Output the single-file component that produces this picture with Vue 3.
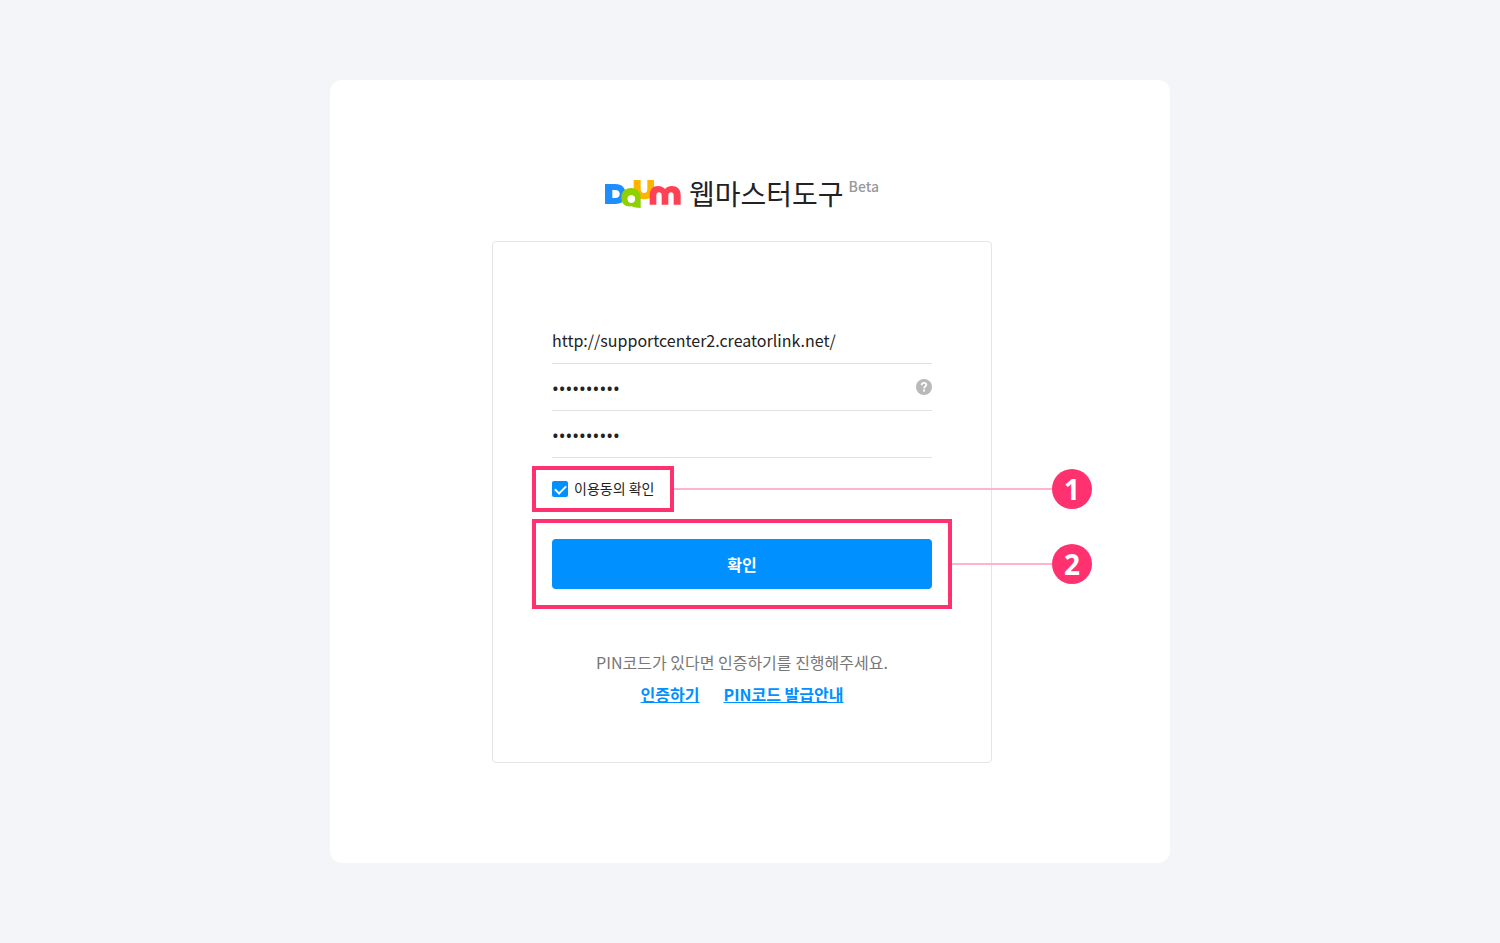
<script setup>
import { ref } from 'vue'

const url = ref('http://supportcenter2.creatorlink.net/')
const pin = ref('1234567890')
const pinAgain = ref('1234567890')
const agreed = ref(true)
</script>

<template>
  <div class="page">
    <main class="card">
      <header class="brand">
        <svg class="logo" viewBox="30 27 228 90" role="img" aria-label="Daum">
          <path fill="#ffb400" d="M116 30h21v27q0 12 10 12t10-12V30h20v29q0 29-30 29t-31-29z" />
          <path fill="#1e8eff" fill-rule="evenodd" d="M30 42h31c20 0 31 12 31 30s-11 30-31 30H30zM52 60v24h9c8 0 13-4 13-12s-5-12-13-12z" />
          <path fill="#8fd000" fill-rule="evenodd" d="M108 54c18 0 29 12 29 29v31c-12 0-21-2-27-5-19 2-31-8-31-26 0-17 11-29 29-29zM109 76a11 11 0 1 0 0 22a11 11 0 1 0 0-22z" />
          <circle cx="109" cy="87" r="11" fill="#fff" />
          <path fill="#ff4155" d="M164 104V75c0-17 11-27 25-27 9 0 16 3 21 9 5-6 12-9 21-9 15 0 26 9 26 26v30h-21V77c0-7-3-10-8-10s-8 3-8 10v27h-20V77c0-7-3-10-8-10s-8 3-8 10v27z" />
        </svg>
        <h1>웹마스터도구</h1>
        <span class="beta">Beta</span>
      </header>

      <form class="panel" @submit.prevent>
        <div class="field">
          <input v-model="url" type="text" aria-label="사이트 URL">
        </div>
        <div class="field">
          <input v-model="pin" type="password" aria-label="PIN코드">
          <button class="help" type="button" aria-label="도움말">
            <svg viewBox="0 0 16 16" aria-hidden="true">
              <circle cx="8" cy="8" r="8" fill="#b9b9b9" />
              <path d="M5.7 6.2C5.7 4.6 6.7 3.8 8 3.8s2.3.8 2.3 2c0 1.6-2.2 1.7-2.2 3.6" fill="none" stroke="#fff" stroke-width="1.8" />
              <rect x="7.1" y="10.6" width="2" height="2" fill="#fff" />
            </svg>
          </button>
        </div>
        <div class="field">
          <input v-model="pinAgain" type="password" aria-label="PIN코드 확인">
        </div>

        <div class="step">
          <div class="frame frame-agree">
            <label class="agree">
              <input v-model="agreed" type="checkbox">
              <span>이용동의 확인</span>
            </label>
          </div>
          <span class="line"></span>
          <span class="badge">1</span>
        </div>

        <div class="step step-submit">
          <div class="frame frame-submit">
            <button class="submit" type="submit">확인</button>
          </div>
          <span class="line"></span>
          <span class="badge">2</span>
        </div>

        <p class="hint">PIN코드가 있다면 인증하기를 진행해주세요.</p>
        <nav class="links">
          <a href="#verify">인증하기</a>
          <a href="#pin-guide">PIN코드 발급안내</a>
        </nav>
      </form>
    </main>
  </div>
</template>

<style>
body {
  background: #f3f5f9;
}
</style>

<style scoped>
.page,
.page * {
  box-sizing: border-box;
}

.page {
  padding: 80px 16px;
  font-family: "Noto Sans CJK KR", "Noto Sans", sans-serif;
  color: #222;
}

.card {
  max-width: 840px;
  margin: 0 auto;
  padding: 92px 178px 100px 162px;
  border-radius: 12px;
  background: #fff;
}

.brand {
  display: flex;
  justify-content: center;
  margin-bottom: 27px;
}

.logo {
  width: 76px;
  height: 30px;
  margin: 7px 8px 0 0;
}

h1 {
  margin: 0;
  font-size: 28px;
  font-weight: 400;
  line-height: 42px;
}

.beta {
  margin: 4px 0 0 5px;
  font-size: 14px;
  font-weight: 500;
  line-height: 20px;
  color: #999;
}

.panel {
  padding: 75px 59px 56px;
  border: 1px solid #e5e5e5;
  border-radius: 4px;
}

.field {
  display: flex;
  align-items: center;
  height: 47px;
  border-bottom: 1px solid #e1e1e1;
}

.field input {
  flex: 1;
  min-width: 0;
  height: 46px;
  padding: 0;
  border: 0;
  outline: 0;
  background: transparent;
  font: inherit;
  font-size: 16px;
  color: #222;
}

.field input[type="password"] {
  padding-top: 2px;
  font-family: "Noto Sans", sans-serif;
  font-size: 18px;
}

.help {
  width: 16px;
  height: 16px;
  padding: 0;
  border: 0;
  background: none;
}

.help svg {
  display: block;
}

.step {
  display: flex;
  align-items: center;
  margin: 8px -160px 0 -20px;
}

.step-submit {
  margin-top: 7px;
}

.frame {
  border: 4px solid #ff326f;
}

.frame-agree {
  padding: 10px 16px 11px;
}

.frame-submit {
  flex: 0 0 420px;
  padding: 16px;
}

.agree {
  display: flex;
  align-items: flex-end;
  gap: 6px;
  font-size: 14px;
  line-height: 17px;
  white-space: nowrap;
}

.agree input {
  appearance: none;
  width: 16px;
  height: 16px;
  margin: 0;
  border-radius: 2px;
  background: #ddd;
}

.agree input:checked {
  display: grid;
  justify-content: center;
  align-content: start;
  padding-top: 4px;
  background: #0090ff;
}

.agree input:checked::before {
  content: "";
  width: 9px;
  height: 5px;
  border: solid #fff;
  border-width: 0 0 2px 2px;
  transform: rotate(-45deg);
}

.line {
  flex: 1;
  height: 2px;
  background: #ffb3cc;
}

.badge {
  flex: none;
  width: 40px;
  height: 40px;
  border-radius: 50%;
  background: #ff326f;
  font: 700 28px/40px "Noto Sans", sans-serif;
  text-align: center;
  color: #fff;
}

.submit {
  display: block;
  width: 100%;
  height: 50px;
  padding: 0;
  border: 0;
  border-radius: 4px;
  background: #0090ff;
  font: inherit;
  font-size: 16px;
  font-weight: 700;
  color: #fff;
}

.hint {
  margin: 41px 0 8px;
  font-size: 16px;
  line-height: 24px;
  text-align: center;
  color: #777;
}

.links {
  display: flex;
  justify-content: center;
  gap: 24px;
  font-size: 16px;
  font-weight: 700;
  line-height: 24px;
}

.links a {
  color: #0090ff;
}
</style>
